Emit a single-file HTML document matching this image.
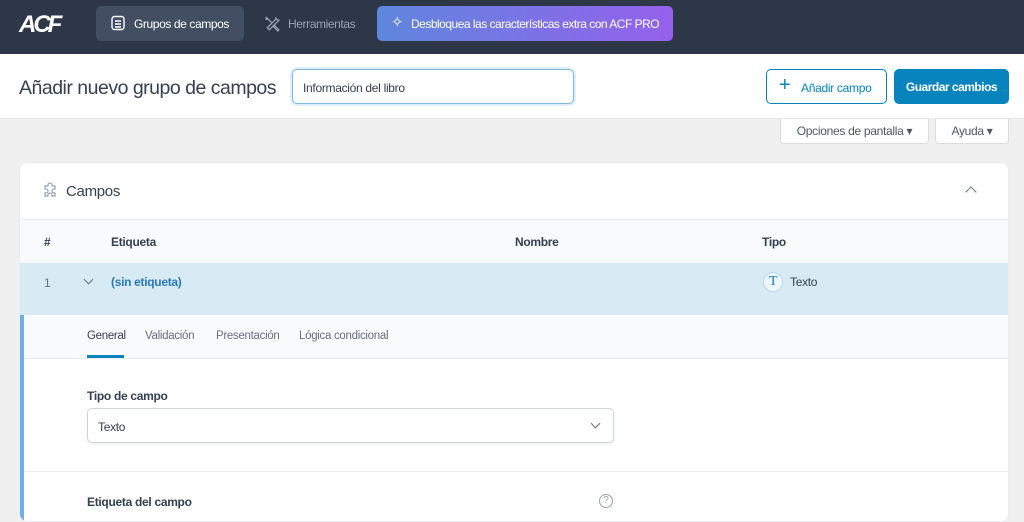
<!DOCTYPE html><html><head><meta charset="utf-8"><style>
*{box-sizing:border-box;margin:0;padding:0}
body{width:1024px;height:512px;overflow:hidden;background:#f0f0f1;font-family:"Liberation Sans",sans-serif;color:#344054;position:relative;letter-spacing:-0.3px}
.a{position:absolute;white-space:nowrap}
.top{left:0;top:0;width:1024px;height:54px;background:#2d3748}
.hdr{left:0;top:54px;width:1024px;height:65px;background:#fff;border-bottom:1px solid #e5e7eb}
</style></head><body>
<div class="a top">
 <div class="a" style="left:19px;top:11px;color:#fff;font-weight:bold;font-size:24px;letter-spacing:-3px;font-style:italic">ACF</div>
 <div class="a" style="left:96px;top:6px;width:148px;height:35px;background:#475467;border-radius:5px;opacity:.85"></div>
 <svg class="a" style="left:110px;top:15px" width="16" height="16" viewBox="0 0 16 16" fill="none" stroke="#fff" stroke-width="1.4"><rect x="2" y="1.5" width="12" height="13" rx="2.5"/><path d="M5 6h6M5 9h6M5 12h6"/></svg>
 <div class="a" style="left:134px;top:17px;font-size:12px;color:#fff;letter-spacing:-0.4px">Grupos de campos</div>
 <svg class="a" style="left:264px;top:15px" width="17" height="17" viewBox="0 0 16 16" fill="none" stroke="#98a2b3" stroke-width="1.2"><path d="M2 2l5 5M2 2l-0 2 2 0M9 9l5 5-1 1-5-5M11 2a3 3 0 0 0 3 3l-9 9-2-2 9-9"/></svg>
 <div class="a" style="left:288px;top:17px;font-size:12px;color:#98a2b3;letter-spacing:-0.4px">Herramientas</div>
 <div class="a" style="left:377px;top:6px;width:296px;height:35px;border-radius:5px;background:linear-gradient(90deg,#5f86dd,#9561ec)"></div>
 <div class="a" style="left:391px;top:13px;color:#fff;font-size:15px">✧</div>
 <div class="a" style="left:411px;top:17px;font-size:12px;color:#fff;letter-spacing:-0.5px">Desbloquea las características extra con ACF PRO</div>
</div>
<div class="a hdr">
 <div class="a" style="left:19px;top:23px;font-size:19.5px;color:#344054;letter-spacing:-0.5px">Añadir nuevo grupo de campos</div>
 <div class="a" style="left:292px;top:15px;width:282px;height:35px;border:1px solid #7fb8e2;border-radius:5px;box-shadow:0 0 0 2px #e0effa;padding:11px 10px;font-size:12px;color:#344054">Información del libro</div>
 <div class="a" style="left:766px;top:15px;width:121px;height:35px;border:1px solid #0783be;border-radius:5px;color:#0783be;font-size:12px"><span class="a" style="left:12px;top:5px;font-size:20px;line-height:20px">+</span><span class="a" style="left:34px;top:11px">Añadir campo</span></div>
 <div class="a" style="left:894px;top:15px;width:115px;height:35px;background:#0783be;border-radius:5px;color:#fff;font-size:12px;font-weight:bold;text-align:center;padding-top:11px;letter-spacing:-0.5px">Guardar cambios</div>
</div>
<div class="a" style="left:780px;top:119px;width:149px;height:25px;background:#fff;border:1px solid #dcdcde;border-top:0;border-radius:0 0 4px 4px;font-size:12px;color:#50575e;text-align:center;padding-top:5px">Opciones de pantalla ▾</div>
<div class="a" style="left:935px;top:119px;width:74px;height:25px;background:#fff;border:1px solid #dcdcde;border-top:0;border-radius:0 0 4px 4px;font-size:12px;color:#50575e;text-align:center;padding-top:5px">Ayuda ▾</div>
<div class="a" style="left:19px;top:162px;width:990px;height:360px;background:#fff;border-radius:8px;border:1px solid #eaecf0;overflow:hidden">
 <svg class="a" style="left:21px;top:19px" width="18" height="18" viewBox="0 0 18 18" fill="none" stroke="#98a2b3" stroke-width="1.2"><path d="M7 3a2 2 0 0 1 4 0v1h3v3h-1a2 2 0 0 0 0 4h1v3h-3v-1a2 2 0 0 0-4 0v1H4v-3h1a2 2 0 0 0 0-4H4V4h3z"/></svg>
 <div class="a" style="left:46px;top:20px;font-size:15px;color:#344054">Campos</div>
 <div class="a" style="left:947px;top:25px;width:8px;height:8px;border-left:1.5px solid #667085;border-top:1.5px solid #667085;transform:rotate(45deg)"></div>
 <div class="a" style="left:0;top:56px;width:990px;height:44px;background:#f9fafb;border-top:1px solid #eaecf0;font-size:12px;font-weight:bold;color:#344054">
  <span class="a" style="left:24px;top:15px">#</span><span class="a" style="left:91px;top:15px">Etiqueta</span><span class="a" style="left:495px;top:15px">Nombre</span><span class="a" style="left:742px;top:15px">Tipo</span></div>
 <div class="a" style="left:0;top:100px;width:990px;height:52px;background:#d8ebf5;font-size:12px">
  <span class="a" style="left:24px;top:13px;color:#667085">1</span>
  <div class="a" style="left:65px;top:13px;width:7px;height:7px;border-right:1.5px solid #667085;border-bottom:1.5px solid #667085;transform:rotate(45deg)"></div>
  <span class="a" style="left:91px;top:12px;color:#2a7ab7;font-weight:bold">(sin etiqueta)</span>
  <div class="a" style="left:743px;top:9px;width:20px;height:20px;border-radius:50%;background:#eef6fb;border:1px solid #b9d9ee;color:#0783be;font-family:'Liberation Serif',serif;font-size:14px;text-align:center;line-height:18px">T</div>
  <span class="a" style="left:770px;top:12px;color:#344054">Texto</span></div>
 <div class="a" style="left:0;top:152px;width:4px;height:210px;background:#72aee6"></div>
 <div class="a" style="left:4px;top:152px;width:986px;height:44px;background:#f9fafb;border-bottom:1px solid #eaecf0;font-size:11.5px;color:#667085">
  <span class="a" style="left:63px;top:15px;color:#344054">General</span><div class="a" style="left:63px;top:40px;width:37px;height:3px;background:#0783be"></div>
  <span class="a" style="left:121px;top:15px">Validación</span><span class="a" style="left:192px;top:15px">Presentación</span><span class="a" style="left:275px;top:15px">Lógica condicional</span></div>
 <div class="a" style="left:67px;top:226px;font-size:12px;font-weight:bold;color:#344054">Tipo de campo</div>
 <div class="a" style="left:67px;top:245px;width:527px;height:35px;border:1px solid #d0d5dd;border-radius:5px;font-size:12px;padding:11px 10px;color:#344054;box-shadow:0 1px 2px rgba(16,24,40,.08)">Texto</div>
 <div class="a" style="left:572px;top:257px;width:7px;height:7px;border-right:1.5px solid #667085;border-bottom:1.5px solid #667085;transform:rotate(45deg)"></div>
 <div class="a" style="left:4px;top:308px;width:986px;height:1px;background:#eaecf0"></div>
 <div class="a" style="left:67px;top:332px;font-size:12px;font-weight:bold;color:#344054">Etiqueta del campo</div>
 <div class="a" style="left:579px;top:331px;width:14px;height:14px;border:1.2px solid #98a2b3;border-radius:50%;font-size:10px;color:#98a2b3;text-align:center;line-height:12px;letter-spacing:0">?</div>
</div>
</body></html>
